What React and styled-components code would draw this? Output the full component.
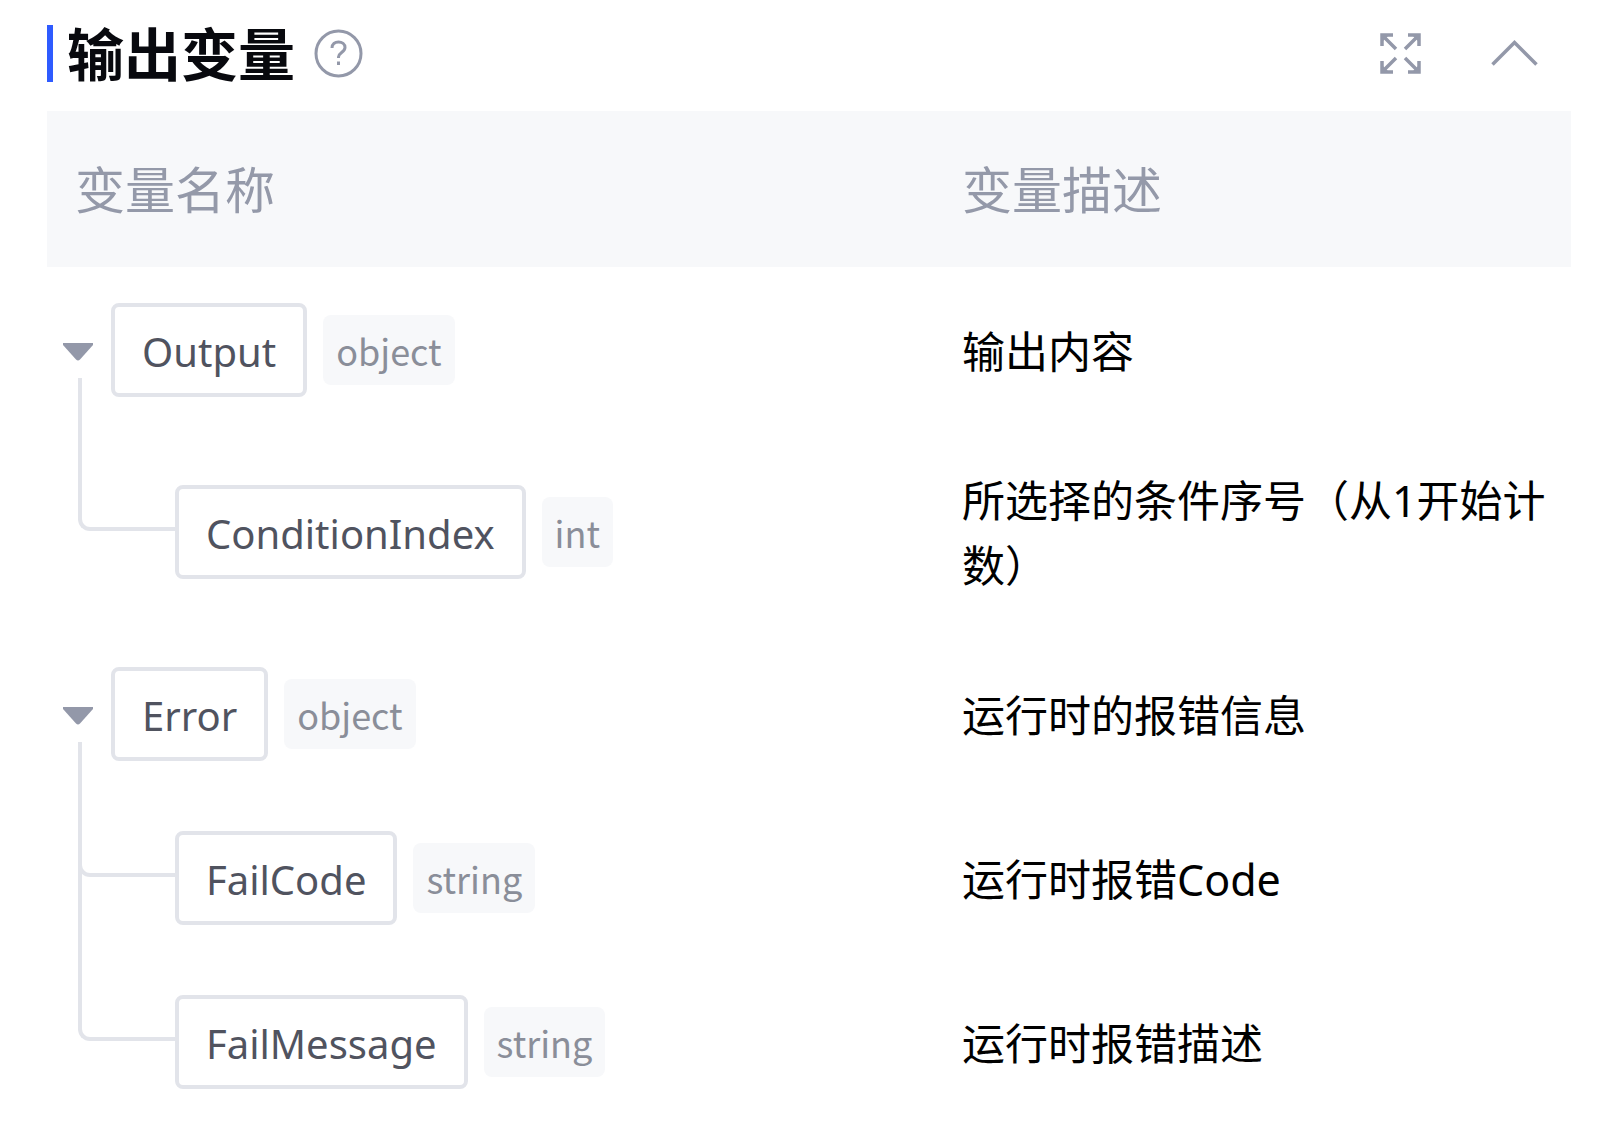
import React, { useState } from "react";
import styled, { createGlobalStyle } from "styled-components";

const GlobalStyle = createGlobalStyle`
  body {
    margin: 0;
    background-color: #fff;
    font-family: "Noto Sans", "Noto Sans CJK SC", sans-serif;
  }
`;

const Container = styled.section`
  padding: 25px 29px 0 47px;
`;

const Header = styled.header`
  display: flex;
  align-items: center;
  justify-content: space-between;
  margin-bottom: 29px;
`;

const TitleGroup = styled.div`
  display: flex;
  align-items: center;
  gap: 19px;
`;

const Title = styled.h2`
  margin: 0;
  padding: 0 0 5px 14px;
  border-left: 6px solid #2f5bff;
  color: #08090e;
  font-family: "Noto Sans CJK SC", sans-serif;
  font-size: 57px;
  font-weight: 700;
  line-height: 52px;
`;

const Actions = styled.div`
  display: flex;
  gap: 57px;
  padding-right: 28px;
`;

const IconButton = styled.button`
  display: flex;
  padding: 0;
  border: none;
  background: none;
  color: #9398a9;
  cursor: pointer;
`;

const Table = styled.table`
  width: 100%;
  table-layout: fixed;
  border-collapse: collapse;
`;

const HeadCell = styled.th`
  width: ${(props) => props.$width};
  height: 156px;
  padding: 0 28px 5px;
  box-sizing: border-box;
  background-color: #f7f8fa;
  color: #9499a9;
  font-family: "Noto Sans CJK SC", sans-serif;
  font-size: 50px;
  font-weight: 400;
  text-align: left;
`;

const NameCell = styled.td`
  position: relative;
  padding: 36px 0 34px ${(props) => (props.$child ? "128px" : "16px")};

  /* elbow from the parent's line to this field */
  &::before {
    content: ${(props) => (props.$child ? '""' : "none")};
    position: absolute;
    left: 31px;
    top: 0;
    width: 97px;
    height: 50%;
    box-sizing: border-box;
    border-left: 4px solid #e2e4ea;
    border-bottom: 4px solid #e2e4ea;
    border-bottom-left-radius: 12px;
  }

  /* line that goes on to the next row */
  &::after {
    content: ${(props) => (props.$continues ? '""' : "none")};
    position: absolute;
    left: 31px;
    top: ${(props) => (props.$child ? "0" : "calc(50% + 29px)")};
    bottom: 0;
    width: 4px;
    background-color: #e2e4ea;
  }
`;

const Field = styled.div`
  display: flex;
  align-items: center;
`;

const Toggle = styled(IconButton)`
  margin-right: 18px;
  padding-top: 4px;
`;

const Name = styled.span`
  padding: 4px 27px 0;
  border: 4px solid #e2e4ea;
  border-radius: 8px;
  color: #50535f;
  font-size: 40px;
  line-height: 82px;
`;

const Type = styled.span`
  margin-left: 16px;
  padding: 0 13px;
  border-radius: 8px;
  background-color: #f7f8fa;
  color: #8a8e99;
  font-family: "Noto Sans CJK SC", sans-serif;
  font-size: 36px;
  line-height: 70px;
`;

const DescCell = styled.td`
  padding: 37px 14px 33px 28px;
  color: #000;
  font-size: 43px;
  line-height: 65px;
`;

const HelpIcon = () => (
  <svg width="49" height="49" viewBox="0 0 49 49" fill="none" stroke="currentColor" strokeWidth="3">
    <circle cx="24.5" cy="24.5" r="22.5" />
    <path d="M18 19c0-4 3-6 6.500-6s6.500 2.200 6.500 5.500c0 4.800-6.500 5.200-6.500 9.500v1" />
    <path d="M24.500 32.500v3.500" />
  </svg>
);

const ExpandIcon = () => (
  <svg width="57" height="57" viewBox="0 0 57 57" fill="none" stroke="currentColor" strokeWidth="3.500">
    <path d="M10 21V10h11M10 10l14 14" />
    <path d="M36 10h11v11M47 10L33 24" />
    <path d="M10 36v11h11M10 47l14-14" />
    <path d="M36 47h11V36M47 47L33 33" />
    <path
      d="M10 10h7l-7 7zM47 10v7l-7-7zM10 47v-7l7 7zM47 47h-7l7-7z"
      fill="currentColor"
      stroke="none"
    />
  </svg>
);

const ChevronIcon = ({ open }) => (
  <svg width="57" height="57" viewBox="0 0 57 57" fill="none" stroke="currentColor" strokeWidth="3.500">
    <path d={open ? "M6.500 39.500l22-22 22 22" : "M6.500 17.500l22 22 22-22"} />
  </svg>
);

const CaretIcon = ({ open }) => (
  <svg width="30" height="18" viewBox="0 0 30 18" fill="currentColor">
    <path d={open ? "M0 0h30v2L17 16.500q-2 2-4 0L0 2z" : "M8 0l13 9L8 18z"} />
  </svg>
);

const variables = [
  {
    name: "Output",
    type: "object",
    desc: "输出内容",
    children: [
      { name: "ConditionIndex", type: "int", desc: "所选择的条件序号（从1开始计数）" },
    ],
  },
  {
    name: "Error",
    type: "object",
    desc: "运行时的报错信息",
    children: [
      { name: "FailCode", type: "string", desc: "运行时报错Code" },
      { name: "FailMessage", type: "string", desc: "运行时报错描述" },
    ],
  },
];

const VariableGroup = ({ variable }) => {
  const [open, setOpen] = useState(true);

  return (
    <tbody>
      <tr>
        <NameCell $continues={open}>
          <Field>
            <Toggle aria-label={variable.name} aria-expanded={open} onClick={() => setOpen(!open)}>
              <CaretIcon open={open} />
            </Toggle>
            <Name>{variable.name}</Name>
            <Type>{variable.type}</Type>
          </Field>
        </NameCell>
        <DescCell>{variable.desc}</DescCell>
      </tr>
      {open &&
        variable.children.map((child, idx) => (
          <tr key={child.name}>
            <NameCell $child $continues={idx < variable.children.length - 1}>
              <Field>
                <Name>{child.name}</Name>
                <Type>{child.type}</Type>
              </Field>
            </NameCell>
            <DescCell>{child.desc}</DescCell>
          </tr>
        ))}
    </tbody>
  );
};

const App = () => {
  const [open, setOpen] = useState(true);

  return (
    <Container>
      <GlobalStyle />
      <Header>
        <TitleGroup>
          <Title>输出变量</Title>
          <IconButton aria-label="帮助">
            <HelpIcon />
          </IconButton>
        </TitleGroup>
        <Actions>
          <IconButton aria-label="全屏">
            <ExpandIcon />
          </IconButton>
          <IconButton aria-label="收起" aria-expanded={open} onClick={() => setOpen(!open)}>
            <ChevronIcon open={open} />
          </IconButton>
        </Actions>
      </Header>
      {open && (
        <Table>
          <thead>
            <tr>
              <HeadCell $width="58.2%">变量名称</HeadCell>
              <HeadCell>变量描述</HeadCell>
            </tr>
          </thead>
          {variables.map((variable) => (
            <VariableGroup key={variable.name} variable={variable} />
          ))}
        </Table>
      )}
    </Container>
  );
};

export default App;
